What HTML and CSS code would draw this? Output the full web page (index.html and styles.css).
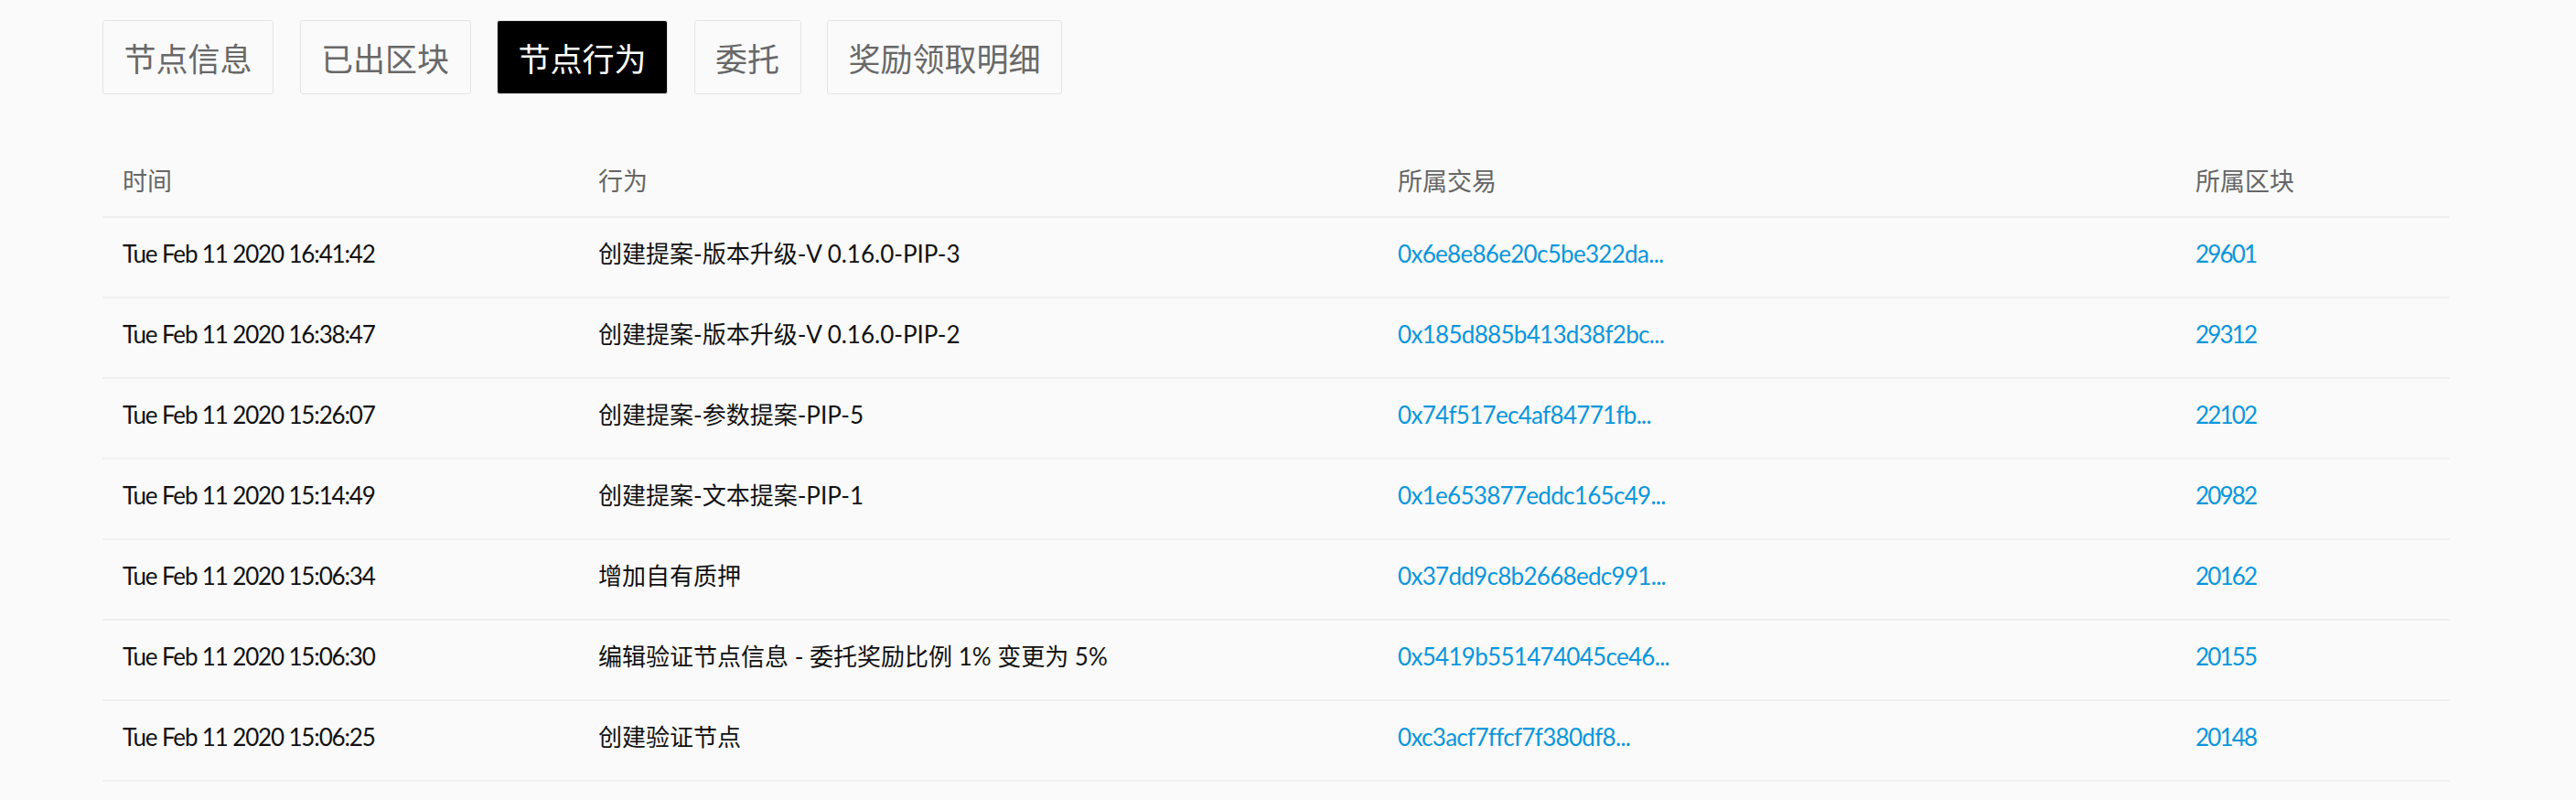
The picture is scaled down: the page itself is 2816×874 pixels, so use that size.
FILE: index.html
```html
<!DOCTYPE html>
<html lang="zh-CN">
<head>
<meta charset="utf-8">
<title>节点行为</title>
<link rel="stylesheet" href="styles.css">
</head>
<body>
<div class="page">
  <nav class="tabs">
    <button class="tab">节点信息</button>
    <button class="tab">已出区块</button>
    <button class="tab active">节点行为</button>
    <button class="tab">委托</button>
    <button class="tab">奖励领取明细</button>
  </nav>
  <table class="records">
    <colgroup>
      <col class="c-time"><col class="c-action"><col class="c-tx"><col class="c-block">
    </colgroup>
    <thead>
      <tr><th>时间</th><th>行为</th><th>所属交易</th><th>所属区块</th></tr>
    </thead>
    <tbody>
      <tr><td class="time">Tue Feb 11 2020 16:41:42</td><td>创建提案-版本升级-V 0.16.0-PIP-3</td><td class="hash"><a class="link">0x6e8e86e20c5be322da...</a></td><td class="num"><a class="link">29601</a></td></tr>
      <tr><td class="time">Tue Feb 11 2020 16:38:47</td><td>创建提案-版本升级-V 0.16.0-PIP-2</td><td class="hash"><a class="link">0x185d885b413d38f2bc...</a></td><td class="num"><a class="link">29312</a></td></tr>
      <tr><td class="time">Tue Feb 11 2020 15:26:07</td><td>创建提案-参数提案-PIP-5</td><td class="hash"><a class="link">0x74f517ec4af84771fb...</a></td><td class="num"><a class="link">22102</a></td></tr>
      <tr><td class="time">Tue Feb 11 2020 15:14:49</td><td>创建提案-文本提案-PIP-1</td><td class="hash"><a class="link">0x1e653877eddc165c49...</a></td><td class="num"><a class="link">20982</a></td></tr>
      <tr><td class="time">Tue Feb 11 2020 15:06:34</td><td>增加自有质押</td><td class="hash"><a class="link">0x37dd9c8b2668edc991...</a></td><td class="num"><a class="link">20162</a></td></tr>
      <tr><td class="time">Tue Feb 11 2020 15:06:30</td><td>编辑验证节点信息 - 委托奖励比例 1% 变更为 5%</td><td class="hash"><a class="link">0x5419b551474045ce46...</a></td><td class="num"><a class="link">20155</a></td></tr>
      <tr><td class="time">Tue Feb 11 2020 15:06:25</td><td>创建验证节点</td><td class="hash"><a class="link">0xc3acf7ffcf7f380df8...</a></td><td class="num"><a class="link">20148</a></td></tr>
    </tbody>
  </table>
</div>
</body>
</html>
```
FILE: styles.css
```css
html, body {
  margin: 0;
  padding: 0;
  background: #fafafa;
}

.page {
  padding: 22px 0 0 112px;
  font-family: "Lato", "Noto Sans CJK SC", sans-serif;
}

.tabs {
  display: flex;
  gap: 28.5px;
}

.tab {
  font-family: "Noto Sans CJK SC", sans-serif;
  font-size: 35px;
  line-height: 79px;
  height: 81px;
  padding: 0 22.5px;
  margin: 0;
  border: 1px solid #e4e4e4;
  border-radius: 3px;
  background: #fafafa;
  color: #686868;
  cursor: pointer;
}

.tab.active {
  background: #000;
  color: #fff;
}

.records {
  margin-top: 55px;
  width: 2566px;
  table-layout: fixed;
  border-collapse: collapse;
  border-spacing: 0;
}

.c-time { width: 520px; }
.c-action { width: 874px; }
.c-tx { width: 872px; }
.c-block { width: 300px; }

.records th {
  font-family: "Noto Sans CJK SC", sans-serif;
  font-weight: normal;
  font-size: 27px;
  color: #666;
  text-align: left;
  height: 78px;
  padding: 0 0 0 22px;
  line-height: 36px;
  vertical-align: middle;
  border-bottom: 2px solid #f0f0f0;
}

.records td {
  font-size: 26px;
  color: #111;
  height: 88px;
  padding: 0 0 8px 22px;
  box-sizing: border-box;
  line-height: 36px;
  vertical-align: middle;
  border-bottom: 2px solid #f0f0f0;
  white-space: nowrap;
}

.records td.time {
  letter-spacing: -1.15px;
}

.records td.hash {
  letter-spacing: -0.7px;
}

.records td.num {
  letter-spacing: -1.8px;
}

.link {
  color: #0a96dc;
  text-decoration: none;
  cursor: pointer;
}
```
